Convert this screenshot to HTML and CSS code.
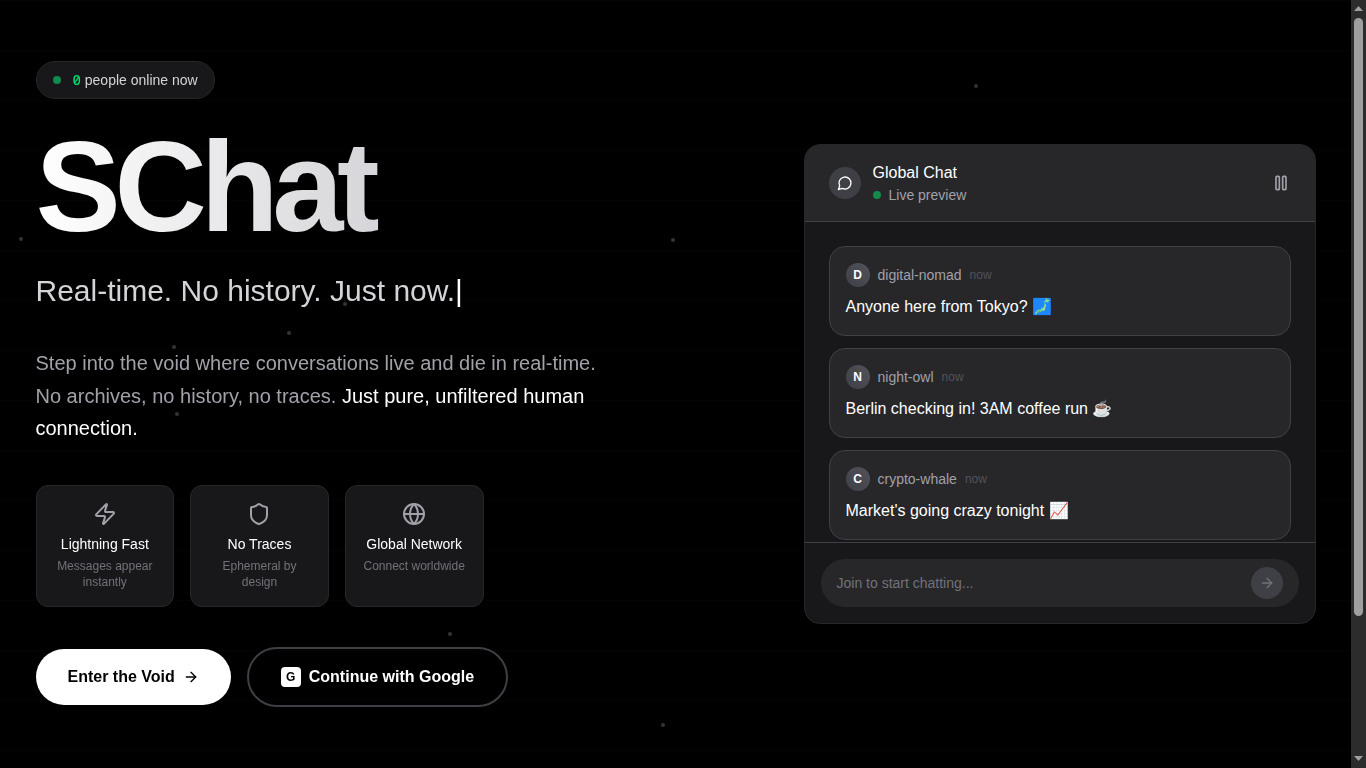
FILE: index.html
```html
<!DOCTYPE html>
<html lang="en">
<head>
<meta charset="utf-8">
<title>SChat</title>
<link rel="stylesheet" href="styles.css">
</head>
<body>
<div class="page">
  <div class="particles">
    <i class="dot" style="left:974px;top:84.4px"></i>
    <i class="dot" style="left:19px;top:237px"></i>
    <i class="dot" style="left:671px;top:238px"></i>
    <i class="dot" style="left:343px;top:302.4px"></i>
    <i class="dot" style="left:287px;top:331.4px"></i>
    <i class="dot" style="left:172px;top:345px"></i>
    <i class="dot" style="left:175px;top:412px"></i>
    <i class="dot" style="left:448px;top:631.6px"></i>
    <i class="dot" style="left:661px;top:722.5px"></i>
  </div>
  <main class="container">
    <section class="hero">
      <div class="online"><span class="pulse"></span><span class="online-text"><span class="count">0</span> people online now</span></div>
      <h1 class="title">SChat</h1>
      <p class="tagline">Real-time. No history. Just now.<span class="caret">|</span></p>
      <p class="lead">Step into the void where conversations live and die in real-time. No archives, no history, no traces. <span class="strong">Just pure, unfiltered human connection.</span></p>
      <div class="features">
        <div class="feature">
          <svg class="icon" width="24" height="24" viewBox="0 0 24 24"><path d="M4 14a1 1 0 0 1-.78-1.63l9.9-10.2a.5.5 0 0 1 .86.46l-1.92 6.02A1 1 0 0 0 13 10h7a1 1 0 0 1 .78 1.63l-9.9 10.2a.5.5 0 0 1-.86-.46l1.92-6.02A1 1 0 0 0 11 14z"/></svg>
          <div class="feature-title">Lightning Fast</div>
          <div class="feature-desc">Messages appear instantly</div>
        </div>
        <div class="feature">
          <svg class="icon" width="24" height="24" viewBox="0 0 24 24"><path d="M20 13c0 5-3.5 7.5-7.66 8.95a1 1 0 0 1-.67-.01C7.5 20.5 4 18 4 13V6a1 1 0 0 1 1-1c2 0 4.5-1.2 6.24-2.72a1.17 1.17 0 0 1 1.52 0C14.51 3.81 17 5 19 5a1 1 0 0 1 1 1z"/></svg>
          <div class="feature-title">No Traces</div>
          <div class="feature-desc">Ephemeral by design</div>
        </div>
        <div class="feature">
          <svg class="icon" width="24" height="24" viewBox="0 0 24 24"><circle cx="12" cy="12" r="10"/><path d="M12 2a14.5 14.5 0 0 0 0 20 14.5 14.5 0 0 0 0-20"/><path d="M2 12h20"/></svg>
          <div class="feature-title">Global Network</div>
          <div class="feature-desc">Connect worldwide</div>
        </div>
      </div>
      <div class="actions">
        <a class="btn btn-primary">Enter the Void <svg class="icon" width="16" height="16" viewBox="0 0 24 24"><path d="M5 12h14"/><path d="m12 5 7 7-7 7"/></svg></a>
        <a class="btn btn-ghost"><span class="g">G</span>Continue with Google</a>
      </div>
    </section>
    <section class="chat">
      <header class="chat-head">
        <div class="chat-logo"><svg class="icon" width="16" height="16" viewBox="0 0 24 24"><path d="M7.9 20A9 9 0 1 0 4 16.1L2 22Z"/></svg></div>
        <div class="chat-info">
          <div class="chat-name">Global Chat</div>
          <div class="chat-status"><span class="pulse"></span>Live preview</div>
        </div>
        <svg class="icon pause" width="20" height="20" viewBox="0 0 24 24"><rect x="14" y="4" width="4" height="16" rx="1"/><rect x="6" y="4" width="4" height="16" rx="1"/></svg>
      </header>
      <div class="messages">
        <article class="msg">
          <div class="msg-head"><span class="avatar">D</span><span class="user">digital-nomad</span><span class="time">now</span></div>
          <p class="msg-text">Anyone here from Tokyo? 🗾</p>
        </article>
        <article class="msg">
          <div class="msg-head"><span class="avatar">N</span><span class="user">night-owl</span><span class="time">now</span></div>
          <p class="msg-text">Berlin checking in! 3AM coffee run ☕</p>
        </article>
        <article class="msg">
          <div class="msg-head"><span class="avatar">C</span><span class="user">crypto-whale</span><span class="time">now</span></div>
          <p class="msg-text">Market's going crazy tonight 📈</p>
        </article>
      </div>
      <footer class="chat-foot">
        <div class="input"><span>Join to start chatting...</span><span class="send"><svg class="icon" width="16" height="16" viewBox="0 0 24 24"><path d="M5 12h14"/><path d="m12 5 7 7-7 7"/></svg></span></div>
      </footer>
    </section>
  </main>
  <div class="scrollbar">
    <svg class="arrow" width="15" height="18" viewBox="0 0 15 18"><path d="M3 11 7.5 6 12 11z"/></svg>
    <div class="thumb"></div>
    <svg class="arrow arrow-down" width="15" height="18" viewBox="0 0 15 18"><path d="M3 6 7.5 11 12 6z"/></svg>
  </div>
</div>
</body>
</html>
```
FILE: styles.css
```css
* { box-sizing: border-box; margin: 0; padding: 0; }
body {
  background: #000;
  color: #fff;
  font: 16px/24px "Liberation Sans", Arial, sans-serif;
  overflow: hidden;
}
.page { position: relative; display: flex; height: 768px; }
.particles {
  position: absolute;
  inset: 0 15px 0 0;
  background: repeating-linear-gradient(to bottom, #040404 0 1px, transparent 1px 50px);
}
.dot { position: absolute; width: 4px; height: 4px; border-radius: 50%; background: rgba(255, 255, 255, .2); will-change: transform; }
.container {
  position: relative;
  flex: none;
  display: flex;
  align-items: center;
  justify-content: space-between;
  width: 1351px;
  padding-right: 35.5px;
}
.hero { width: 627.5px; padding-left: 35.5px; will-change: transform; }
.icon { display: block; flex: none; fill: none; stroke: currentColor; stroke-width: 2; stroke-linecap: round; stroke-linejoin: round; }
.pulse { width: 8px; height: 8px; border-radius: 50%; background: #158a4b; flex: none; }
.online {
  display: inline-flex;
  align-items: center;
  gap: 12px;
  height: 38px;
  padding: 0 16px;
  border: 1px solid #27272a;
  border-radius: 19px;
  background: #18181b;
  color: #d4d4d8;
  font-size: 14px;
  line-height: 20px;
  vertical-align: top;
}
.count { font-family: "Noto Sans Mono", "Liberation Mono", monospace; font-weight: 500; line-height: 1; color: #05df72; }
.title {
  margin-top: 24px;
  font-size: 128px;
  line-height: 128px;
  letter-spacing: -6.4px;
  background: linear-gradient(to right, #fff, #d4d4d8 60%, #a1a1aa);
  -webkit-background-clip: text;
  background-clip: text;
  color: transparent;
}
.tagline { margin-top: 20px; font-size: 30px; line-height: 40px; color: #d4d4d8; }
.caret { color: #fff; }
.lead { margin-top: 36px; font-size: 20px; line-height: 32.5px; color: #a1a1aa; max-width: 576px; }
.strong { color: #fff; }
.features { display: grid; grid-template-columns: repeat(3, 1fr); gap: 16px; width: 448px; margin-top: 40px; }
.feature {
  padding: 16px;
  border: 1px solid #27272a;
  border-radius: 12px;
  background: #18181b;
  text-align: center;
}
.feature .icon { margin: 0 auto 8px; color: #a1a1aa; }
.feature-title { font-size: 14px; line-height: 20px; white-space: nowrap; }
.feature-desc { margin-top: 4px; font-size: 12px; line-height: 16px; color: #71717a; }
.actions { display: flex; align-items: center; gap: 16px; margin-top: 40px; }
.btn { display: flex; align-items: center; gap: 8px; height: 56px; padding: 0 32px; border-radius: 30px; font-weight: 700; }
.btn-primary { background: #fff; color: #000; }
.btn-ghost { height: 60px; border: 2px solid #3f3f46; }
.g { width: 20px; height: 20px; border-radius: 4px; background: #fff; color: #000; font-size: 12px; line-height: 20px; text-align: center; }
.chat {
  display: flex;
  flex-direction: column;
  width: 512px;
  height: 480px;
  border: 1px solid #27272a;
  border-radius: 16px;
  background: #18181b;
  overflow: hidden;
}
.chat-head {
  display: flex;
  align-items: center;
  flex: none;
  gap: 12px;
  height: 77px;
  padding: 0 24px;
  background: #27272a;
  border-bottom: 1px solid #3f3f46;
}
.chat-logo { display: grid; place-items: center; width: 32px; height: 32px; border-radius: 50%; background: #3f3f46; }
.chat-info { flex: 1; }
.chat-status { display: flex; align-items: center; gap: 8px; font-size: 14px; line-height: 20px; color: #a1a1aa; }
.pause { color: #a1a1aa; }
.messages { flex: 1; min-height: 0; overflow: hidden; padding: 24px 24px 0; }
.msg { height: 90px; margin-bottom: 12px; padding: 16px; border: 1px solid #3f3f46; border-radius: 16px; background: #27272a; }
.msg-head { display: flex; align-items: center; gap: 8px; margin-bottom: 8px; }
.avatar {
  width: 24px;
  height: 24px;
  border-radius: 50%;
  background: linear-gradient(to top right, #3f3f46, #52525b);
  font-size: 12px;
  font-weight: 700;
  text-align: center;
}
.user { font-size: 14px; color: #a1a1aa; }
.time { font-size: 12px; color: #52525b; }
.chat-foot { flex: none; padding: 16px; border-top: 1px solid #3f3f46; }
.input {
  display: flex;
  align-items: center;
  justify-content: space-between;
  height: 48px;
  padding: 0 16px;
  border-radius: 24px;
  background: #27272a;
  color: #71717a;
  font-size: 14px;
}
.send { display: grid; place-items: center; width: 32px; height: 32px; border-radius: 50%; background: #3f3f46; }
.scrollbar { position: relative; flex: none; display: flex; flex-direction: column; width: 15px; height: 768px; background: #2c2c2c; }
.thumb { width: 9px; height: 598px; margin-left: 3px; border-radius: 4.5px; background: #9f9f9f; }
.arrow { display: block; fill: #9f9f9f; }
.arrow-down { margin-top: auto; }
```
